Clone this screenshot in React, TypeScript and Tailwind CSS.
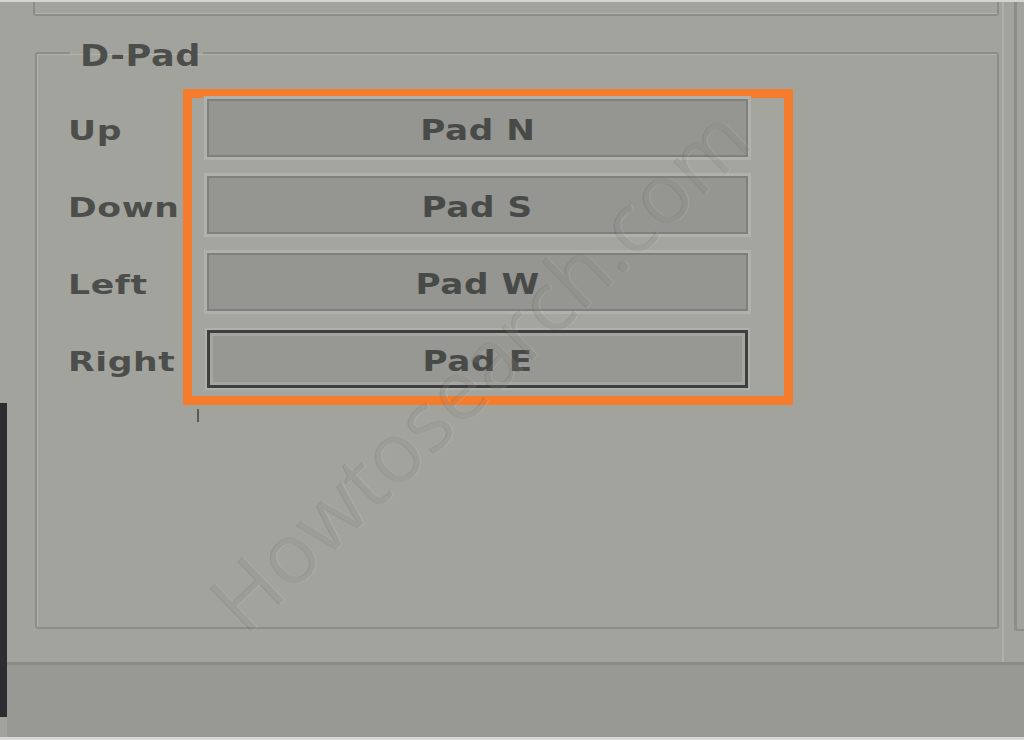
import React from "react";

const labels = ["Up", "Down", "Left", "Right"];
const pads = ["Pad N", "Pad S", "Pad W", "Pad E"];

export default function App() {
  return (
    <div className="relative w-[1024px] h-[740px] overflow-hidden bg-[#a3a39d] flex flex-col font-['DejaVu_Sans',sans-serif]">
      <div className="h-[2px] shrink-0 bg-[#d4d4d2]" />
      <div className="flex flex-1 min-h-0">
        {/* left dark edge of another window */}
        <div className="w-[7px] shrink-0 flex flex-col">
          <div className="h-[401px]" />
          <div className="h-[314px] bg-[#2c2c31]" />
        </div>
        <div className="flex-1 flex flex-col min-w-0">
          <div className="flex-1 flex min-h-0">
            <div className="w-[995px] shrink-0 flex flex-col">
              {/* bottom of the group box above */}
              <div className="ml-[26px] w-[966px] h-[14px] border-x-2 border-b-2 border-[#8c8c88] rounded-b-[3px] shadow-[inset_0_-1px_0_#b4b4ae]" />
              {/* D-Pad group box */}
              <fieldset className="ml-[28px] mt-[22px] w-[964px] h-[591px] border-2 border-[#8c8c88] rounded-[3px] pl-[31px] pt-[21px] shadow-[inset_1px_1px_0_#b4b4ae]">
                <legend className="ml-[2px] w-[133px] pl-[10px] text-[30px] leading-[30px] font-bold text-[#4c4e4c]">
                  <span className="inline-block origin-left scale-x-[1.17] translate-y-[3px] tracking-[0.5px]">D-Pad</span>
                </legend>
                <div className="flex items-start">
                  <div className="w-[115px] shrink-0 pt-[10px] flex flex-col gap-[19px]">
                    {labels.map((l) => (
                      <div
                        key={l}
                        className="h-[58px] flex items-center whitespace-nowrap text-[27px] font-bold text-[#4c4e4c]"
                      >
                        <span className="inline-block origin-left scale-x-[1.28] translate-y-[3px] tracking-[0.5px]">{l}</span>
                      </div>
                    ))}
                  </div>
                  <div className="flex flex-col">
                    <div className="relative w-[610px] h-[316px] border-[9px] border-[#f57c2c] bg-[#a5a59f] pl-[15px] pt-[1px]">
                      <div className="w-[541px] flex flex-col gap-[19px]">
                        {pads.map((p, i) =>
                          i === 3 ? (
                            <div
                              key={p}
                              className="h-[58px] flex items-center justify-center border-[3px] border-[#3e3f3e] bg-[#979793] shadow-[0_0_0_2px_#b1b1ab,inset_0_0_0_3px_#a6a6a1] text-[29px] font-bold text-[#484a48]"
                            >
                              <span className="inline-block scale-x-[1.18] translate-y-[3px] tracking-[0.5px]">{p}</span>
                            </div>
                          ) : (
                            <div
                              key={p}
                              className="h-[58px] flex items-center justify-center border-2 border-[#7f7f7b] bg-[#959591] shadow-[0_0_0_3px_#b1b1ab] text-[29px] font-bold text-[#484a48]"
                            >
                              <span className="inline-block scale-x-[1.18] translate-y-[3px] tracking-[0.5px]">{p}</span>
                            </div>
                          )
                        )}
                      </div>
                    </div>
                    <div className="ml-[14px] mt-[4px] w-[2px] h-[13px] bg-[#5a5a58]" />
                  </div>
                </div>
              </fieldset>
            </div>
            {/* neighbouring group box on the right */}
            <div className="flex-1 flex">
              <div className="w-[2px] bg-[#b0b0aa]" />
              <div className="ml-[10px] flex-1 h-[629px] border-l-[3px] border-b-2 border-[#8c8c88] rounded-bl-[3px]" />
            </div>
          </div>
          {/* bottom band */}
          <div className="h-[75px] shrink-0 border-t-[3px] border-[#8a8a86] bg-[#989894]" />
        </div>
      </div>
      <div className="h-[3px] shrink-0 bg-[#d8d8d6]" />

      {/* watermark */}
      <div className="pointer-events-none absolute left-[478px] top-[368px] -translate-x-1/2 -translate-y-1/2 rotate-[-44deg] whitespace-nowrap font-['Open_Sans',sans-serif] font-normal text-[84px] leading-none text-[rgba(50,50,45,0.12)] [text-shadow:1px_1px_0_rgba(255,255,255,0.1)]">
        Howtosearch.com
      </div>
    </div>
  );
}
